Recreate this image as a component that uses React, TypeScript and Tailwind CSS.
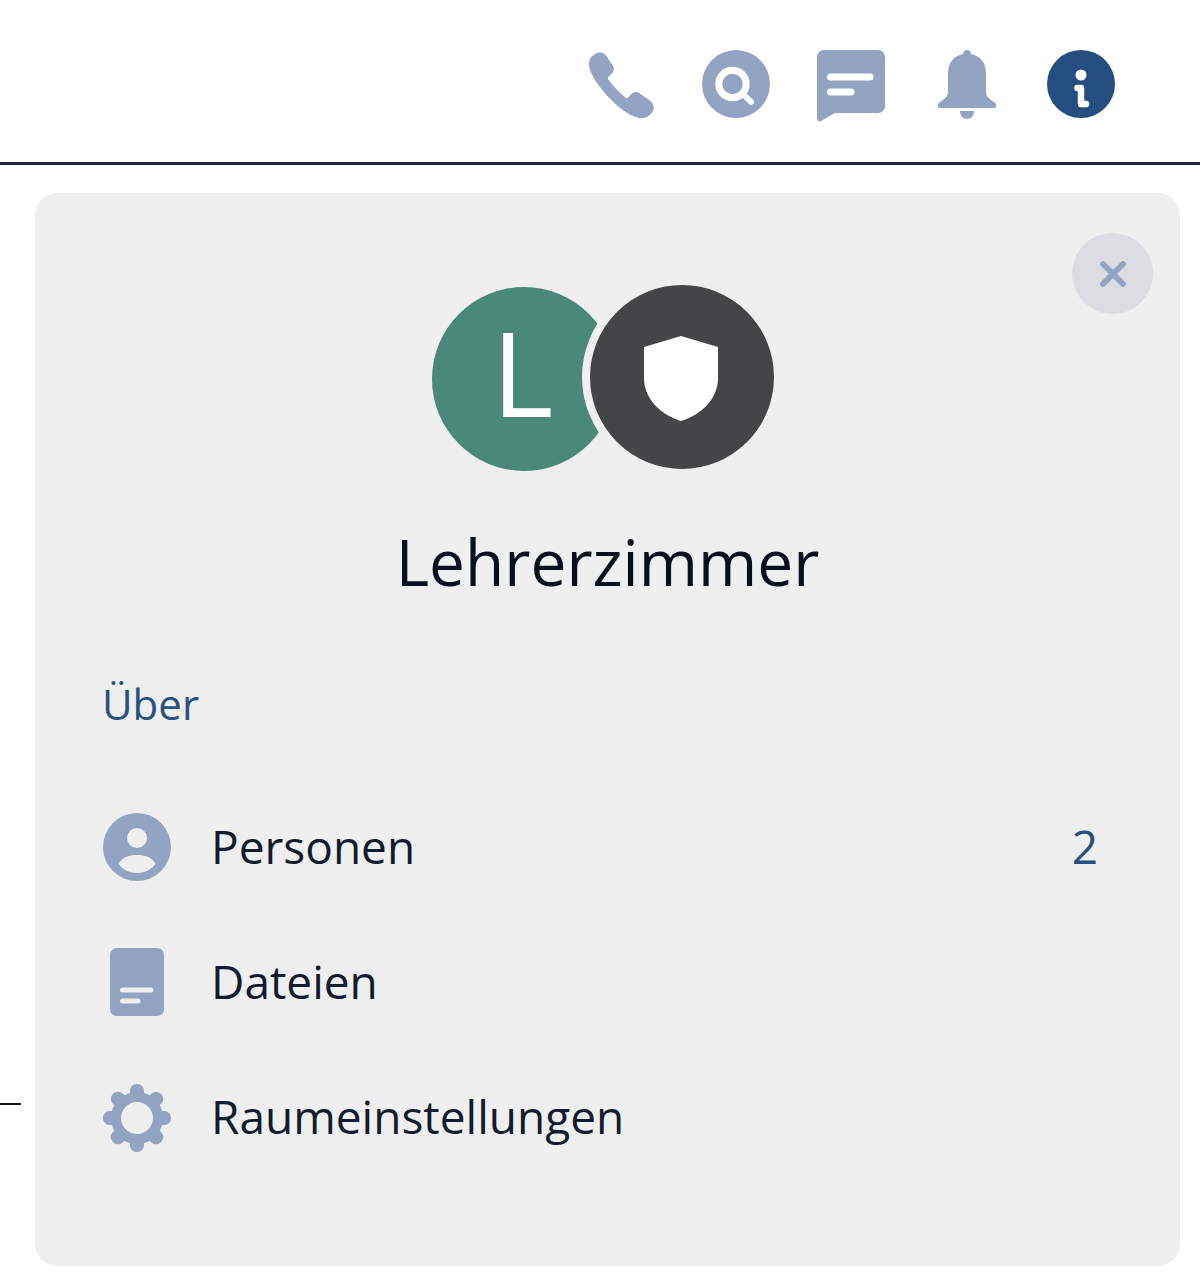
import { X } from "lucide-react";

const ICON = "#93a4c3";
const PANEL = "#efefef";

const PhoneIcon = () => (
  <svg width="68" height="68" viewBox="0 0 66 66" fill={ICON} className="translate-x-[1px] translate-y-[1px]">
    <path d="M7 3C12 0 16 2 18 5L24 14C26 17 25 20 23 22L20 25C19 26 19 27 20 28C25 35 30 40 36 45C37 46 38 46 39 45L42 42C44 40 47 39 50 41L60 48C64 51 65 56 62 60C59 64 55 66 50 65C38 63 24 50 14 38C6 28 0 18 1 11C1 8 3 5 7 3Z" />
  </svg>
);

const SearchIcon = () => (
  <svg width="68" height="68" viewBox="0 0 68 68">
    <circle cx="34" cy="34" r="34" fill={ICON} />
    <circle cx="30.5" cy="34" r="13.7" fill="none" stroke="#fff" strokeWidth="7" />
    <path d="M42 45L49 52" stroke="#fff" strokeWidth="6" strokeLinecap="round" />
  </svg>
);

const ChatIcon = () => (
  <svg width="70" height="72" viewBox="0 0 70 72" className="translate-y-[2px]">
    <path d="M8 0H62C66 0 69 3 69 8V56C69 60 66 63 62 63H19L5 71C3 72 1 71 1 68V8C1 3 4 0 8 0Z" fill={ICON} />
    <path d="M14.5 27H54M14.5 42H35" stroke="#fff" strokeWidth="7" strokeLinecap="round" />
  </svg>
);

const BellIcon = () => (
  <svg width="62" height="70" viewBox="0 0 62 70" fill={ICON} className="translate-x-[1px] translate-y-[1px]">
    <path d="M31 0C33 0 35 1 35 4C45 6 50 13 50 24V42C50 46 53 49 58 52C61 54 61 58 58 58H4C1 58 1 54 4 52C9 49 12 46 12 42V24C12 13 17 6 27 4C27 1 29 0 31 0Z" />
    <path d="M24 61H38C38 66 35 69 31 69C27 69 24 66 24 61Z" />
  </svg>
);

const InfoIcon = () => (
  <svg width="68" height="68" viewBox="0 0 68 68">
    <circle cx="34" cy="34" r="34" fill="#254e80" />
    <circle cx="34" cy="25" r="5.5" fill="#fff" />
    <path d="M30.5 38H34V54H39" fill="none" stroke="#fff" strokeWidth="6.5" strokeLinecap="round" strokeLinejoin="round" />
  </svg>
);

const PersonIcon = () => (
  <svg width="68" height="68" viewBox="0 0 68 68">
    <circle cx="34" cy="34" r="34" fill={ICON} />
    <circle cx="34" cy="25" r="10" fill={PANEL} />
    <path d="M15.5 51C19 44 26 42 34 42C42 42 49 44 52.5 51C48 57 41 60 34 60C27 60 20 57 15.5 51Z" fill={PANEL} />
  </svg>
);

const FileIcon = () => (
  <svg width="68" height="68" viewBox="0 0 68 68">
    <rect x="7" y="0" width="54" height="68" rx="7" fill={ICON} />
    <path d="M19.5 42H48M19.5 53H35" stroke={PANEL} strokeWidth="5" strokeLinecap="round" />
  </svg>
);

const GearIcon = () => {
  const teeth = [0, 45, 90, 135, 180, 225, 270, 315];
  return (
    <svg width="68" height="68" viewBox="0 0 68 68" className="translate-y-[1px]">
      {teeth.map((deg) => (
        <rect key={deg} x="27" y="0" width="14" height="20" rx="6.5" fill={ICON} transform={`rotate(${deg} 34 34)`} />
      ))}
      <circle cx="34" cy="34" r="21" fill={PANEL} stroke={ICON} strokeWidth="10" />
    </svg>
  );
};

const ShieldIcon = () => (
  <svg width="76" height="86" viewBox="0 0 76 86" fill="#fff">
    <path d="M38 0L75 11V42C75 63 58 79 38 85C18 79 1 63 1 42V11Z" />
  </svg>
);

const topIcons = [<PhoneIcon />, <SearchIcon />, <ChatIcon />, <BellIcon />, <InfoIcon />];

const rows = [
  { label: "Personen", icon: <PersonIcon />, count: "2" },
  { label: "Dateien", icon: <FileIcon /> },
  { label: "Raumeinstellungen", icon: <GearIcon /> },
];

export default function App() {
  return (
    <div className="relative w-[1200px] h-[1279px] bg-white overflow-hidden font-['Open_Sans',sans-serif]">
      <header className="h-[165px] border-b-[3px] border-[#1b2540] flex items-center justify-end pr-[62px] pt-[6px]">
        {topIcons.map((icon, i) => (
          <div key={i} className="w-[115px] flex justify-center">
            {icon}
          </div>
        ))}
      </header>

      <div className="absolute left-0 top-[1103px] w-[21px] h-[2px] bg-[#0d1426]" />

      <main className="relative ml-[35px] mt-[28px] w-[1145px] h-[1073px] bg-[#efefef] rounded-[22px] pt-[84px]">
        <button className="absolute top-[40px] right-[27px] w-[81px] h-[81px] rounded-full bg-[#dcdde2] flex items-center justify-center">
          <X size={40} color={ICON} strokeWidth={3.5} />
        </button>

        <div className="flex justify-center items-start pr-[2px]">
          <div className="w-[184px] h-[184px] mt-[10px] rounded-full bg-[#4a8878] flex items-center justify-center pb-[14px] pr-[2px] text-white text-[118px] leading-none">
            L
          </div>
          <div className="-ml-[34px] w-[200px] h-[200px] rounded-full bg-[#444547] border-[8px] border-[#efefef] flex items-center justify-center pt-[3px] pr-[2px]">
            <ShieldIcon />
          </div>
        </div>

        <h1 className="mt-[41px] text-center text-[64px] leading-[88px] text-[#0a0f1f]">Lehrerzimmer</h1>

        <div className="mt-[68px] ml-[68px] mr-[69px]">
          <h2 className="-ml-[1px] text-[42px] leading-[60px] text-[#2a5082]">Über</h2>
          <ul className="mt-[79px] flex flex-col gap-[67px]">
            {rows.map((r) => (
              <li key={r.label} className="flex items-center h-[68px]">
                {r.icon}
                <span className="ml-[40px] -translate-y-[1px] text-[46px] text-[#131b2e]">{r.label}</span>
                {r.count && <span className="ml-auto mr-[13px] -translate-y-[1px] text-[46px] text-[#2a5082]">{r.count}</span>}
              </li>
            ))}
          </ul>
        </div>
      </main>
    </div>
  );
}
